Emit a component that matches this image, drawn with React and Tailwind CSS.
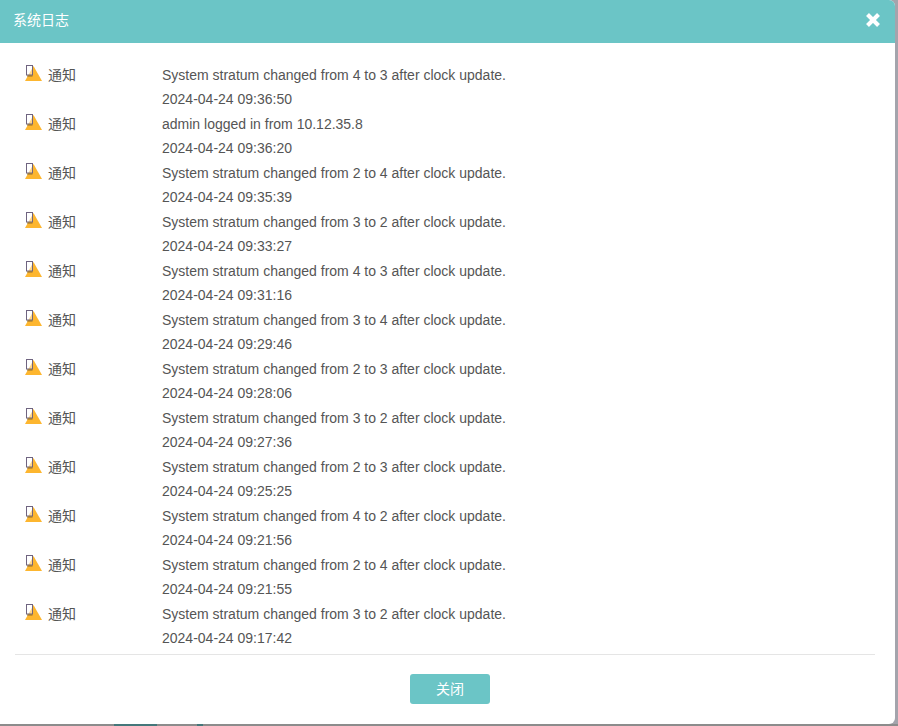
import { X } from 'lucide-react'

const logs = [
  ['System stratum changed from 4 to 3 after clock update.', '2024-04-24 09:36:50'],
  ['admin logged in from 10.12.35.8', '2024-04-24 09:36:20'],
  ['System stratum changed from 2 to 4 after clock update.', '2024-04-24 09:35:39'],
  ['System stratum changed from 3 to 2 after clock update.', '2024-04-24 09:33:27'],
  ['System stratum changed from 4 to 3 after clock update.', '2024-04-24 09:31:16'],
  ['System stratum changed from 3 to 4 after clock update.', '2024-04-24 09:29:46'],
  ['System stratum changed from 2 to 3 after clock update.', '2024-04-24 09:28:06'],
  ['System stratum changed from 3 to 2 after clock update.', '2024-04-24 09:27:36'],
  ['System stratum changed from 2 to 3 after clock update.', '2024-04-24 09:25:25'],
  ['System stratum changed from 4 to 2 after clock update.', '2024-04-24 09:21:56'],
  ['System stratum changed from 2 to 4 after clock update.', '2024-04-24 09:21:55'],
  ['System stratum changed from 3 to 2 after clock update.', '2024-04-24 09:17:42'],
]

function NoticeIcon() {
  return (
    <svg width="18" height="18" viewBox="0 0 18 18" className="mt-0.5 shrink-0">
      <path d="M8.5 1 L17 16 L0 16 Z" fill="#fdb62f" />
      <rect x="1.5" y="0.5" width="6" height="9.5" fill="#ffffff" fillOpacity="0.45" stroke="#6f6480" strokeWidth="1" />
      <rect x="2" y="10.5" width="5.5" height="1" fill="#8a6a30" />
    </svg>
  )
}

export default function App() {
  return (
    <div className="h-[726px] w-[898px] overflow-hidden bg-[#a4a4ac] font-['Liberation_Sans','Noto_Sans_CJK_SC',sans-serif] text-sm text-[#555]">
      <div className="flex h-[724px] w-[895px] flex-col overflow-hidden rounded-br-md rounded-tr-md bg-white">
        <div className="flex h-[43px] shrink-0 items-center justify-between bg-[#6bc5c6] pb-1 pl-[13px] pr-[11px] text-white">
          <span className="text-sm">系统日志</span>
          <X size={22} strokeWidth={4.5} strokeLinecap="butt" />
        </div>
        <div className="flex-1 px-[25px] pt-5">
          {logs.map(([msg, time], i) => (
            <div key={i} className="flex h-[49px]">
              <div className="flex w-[137px] shrink-0 items-start gap-[5px]">
                <NoticeIcon />
                <span className="leading-6">通知</span>
              </div>
              <div className="leading-6">
                <div>{msg}</div>
                <div>{time}</div>
              </div>
            </div>
          ))}
        </div>
        <div className="ml-[15px] mr-5 flex h-[70px] shrink-0 items-start justify-center border-t border-[#e5e5e5] pl-2.5 pt-[19px]">
          <button type="button" className="h-[30px] w-20 rounded-[3px] bg-[#6bc5c6] text-sm text-white">
            关闭
          </button>
        </div>
      </div>
      <div className="flex h-0.5 bg-[#8c8c8c]">
        <div className="ml-[114px] w-[43px] bg-[#44777a]" />
        <div className="ml-10 w-1.5 bg-[#44777a]" />
      </div>
    </div>
  )
}
